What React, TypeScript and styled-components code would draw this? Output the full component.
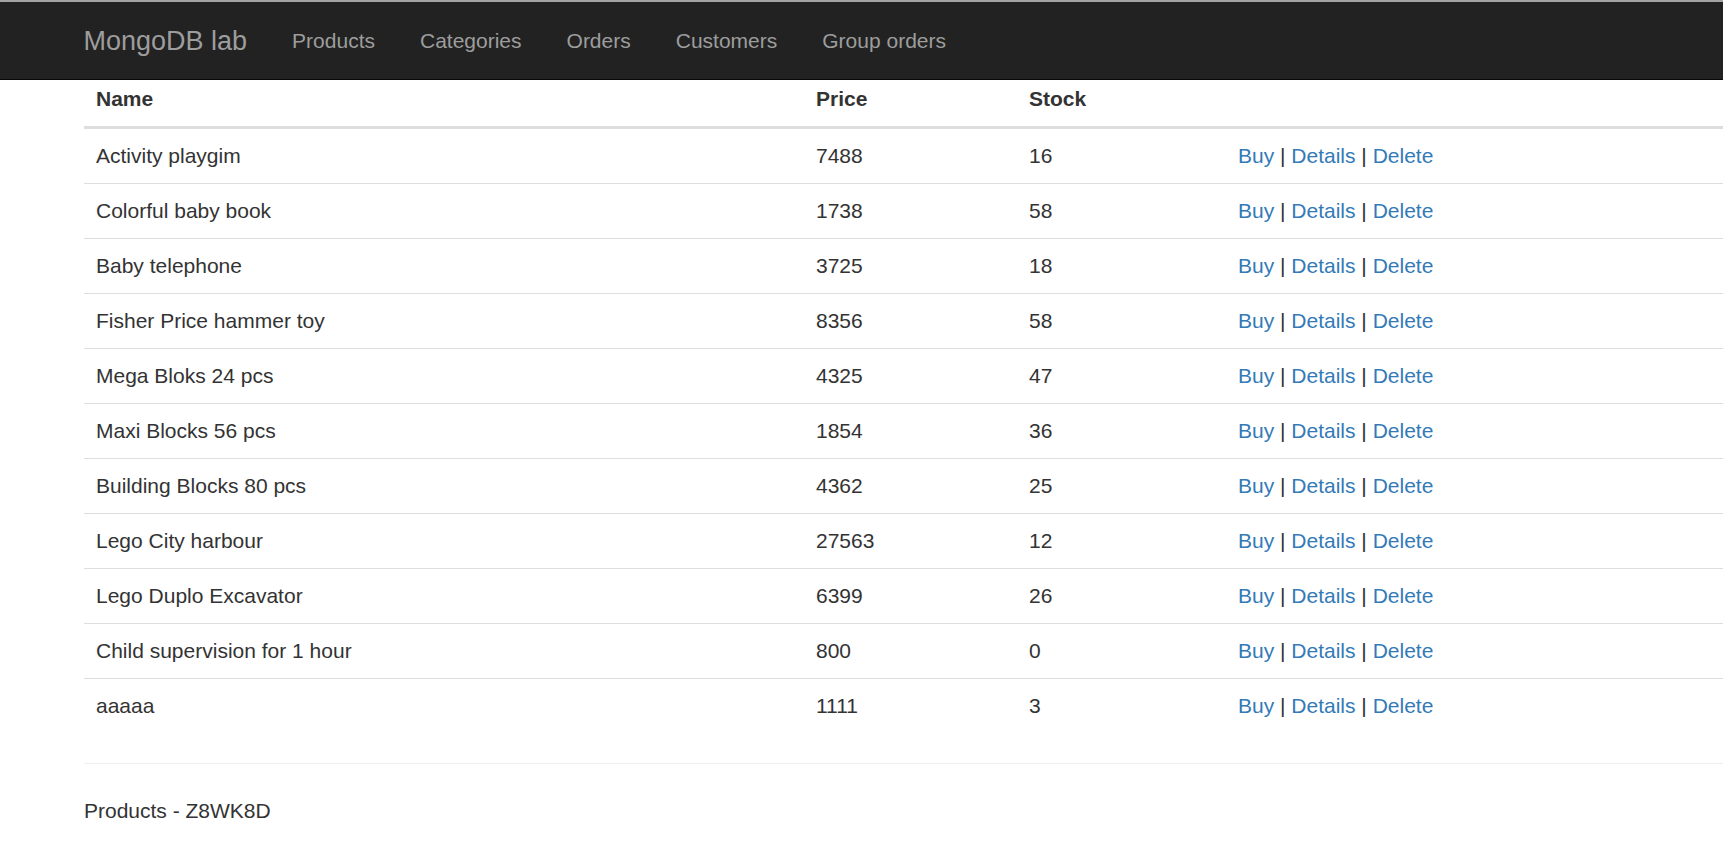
import React from 'react'
import styled, { createGlobalStyle } from 'styled-components'

type Product = {
  name: string
  price: number
  stock: number
}

const PRODUCTS: Product[] = [
  { name: 'Activity playgim', price: 7488, stock: 16 },
  { name: 'Colorful baby book', price: 1738, stock: 58 },
  { name: 'Baby telephone', price: 3725, stock: 18 },
  { name: 'Fisher Price hammer toy', price: 8356, stock: 58 },
  { name: 'Mega Bloks 24 pcs', price: 4325, stock: 47 },
  { name: 'Maxi Blocks 56 pcs', price: 1854, stock: 36 },
  { name: 'Building Blocks 80 pcs', price: 4362, stock: 25 },
  { name: 'Lego City harbour', price: 27563, stock: 12 },
  { name: 'Lego Duplo Excavator', price: 6399, stock: 26 },
  { name: 'Child supervision for 1 hour', price: 800, stock: 0 },
  { name: 'aaaaa', price: 1111, stock: 3 },
]

const NAV_LINKS = ['Products', 'Categories', 'Orders', 'Customers', 'Group orders']

const GlobalStyle = createGlobalStyle`
  html, body {
    margin: 0;
    padding: 0;
    background: #fff;
    overflow: hidden;
  }
  body {
    font-family: 'Liberation Sans', Arial, Helvetica, sans-serif;
    font-size: 21px;
    line-height: 30px;
    color: #333;
  }
`

const Page = styled('div')`
  width: 1723px;
  height: 853px;
  border-top: 2px solid #a3a3a3;
  box-sizing: border-box;
`

const Navbar = styled('nav')`
  display: flex;
  align-items: center;
  height: 77px;
  padding-left: 61px;
  background-color: #222;
  border-bottom: 1px solid #080808;
`

const Brand = styled('a')`
  padding: 0 22.5px;
  font-size: 27px;
  line-height: 30px;
  color: #9d9d9d;
  text-decoration: none;
`

const NavLink = styled('a')`
  padding: 0 22.5px;
  font-size: 21px;
  line-height: 30px;
  color: #9d9d9d;
  text-decoration: none;
`

const Content = styled('div')`
  padding-left: 84px;
`

const Table = styled('table')`
  width: 1700px;
  border-collapse: collapse;
  border-spacing: 0;
  margin-bottom: 30px;
  table-layout: fixed;
`

const Th = styled('th')`
  padding: 4px 12px 12px;
  text-align: left;
  font-weight: bold;
  line-height: 30px;
  border-bottom: 3px solid #ddd;
`

const Td = styled('td')`
  padding: 12px;
  line-height: 30px;
  border-top: 1px solid #ddd;
  white-space: nowrap;
`

const ActionLink = styled('a')`
  color: #337ab7;
  text-decoration: none;
`

const Rule = styled('hr')`
  margin: 0 0 32px;
  border: 0;
  border-top: 1px solid #eee;
`

const Footer = styled('p')`
  margin: 0;
  line-height: 30px;
`

export default function App(): React.ReactElement {
  return (
    <>
      <GlobalStyle />
      <Page>
        <Navbar>
          <Brand href="#">MongoDB lab</Brand>
          {NAV_LINKS.map((link) => (
            <NavLink key={link} href="#">
              {link}
            </NavLink>
          ))}
        </Navbar>
        <Content>
          <Table>
            <colgroup>
              <col style={{ width: 720 }} />
              <col style={{ width: 213 }} />
              <col style={{ width: 209 }} />
              <col />
            </colgroup>
            <thead>
              <tr>
                <Th>Name</Th>
                <Th>Price</Th>
                <Th>Stock</Th>
                <Th></Th>
              </tr>
            </thead>
            <tbody>
              {PRODUCTS.map((p) => (
                <tr key={p.name}>
                  <Td>{p.name}</Td>
                  <Td>{p.price}</Td>
                  <Td>{p.stock}</Td>
                  <Td>
                    <ActionLink href="#">Buy</ActionLink> |{' '}
                    <ActionLink href="#">Details</ActionLink> |{' '}
                    <ActionLink href="#">Delete</ActionLink>
                  </Td>
                </tr>
              ))}
            </tbody>
          </Table>
          <Rule />
          <Footer>Products - Z8WK8D</Footer>
        </Content>
      </Page>
    </>
  )
}
